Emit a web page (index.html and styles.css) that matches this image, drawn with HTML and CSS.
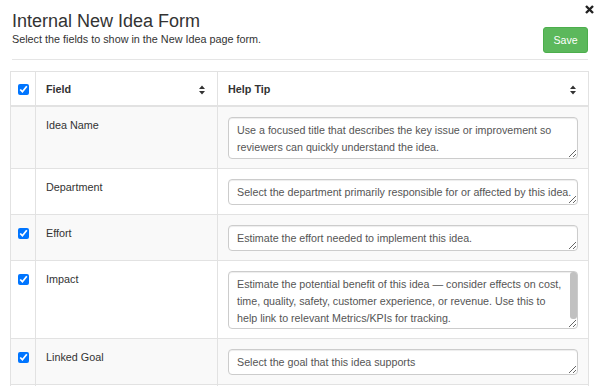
FILE: index.html
```html
<!DOCTYPE html>
<html lang="en">
<head>
    <meta charset="UTF-8">
    <meta name="viewport" content="width=device-width, initial-scale=1.0">
    <title>Internal New Idea Form</title>
    <link rel="stylesheet" href="styles.css">
</head>
<body>
    <div class="modal">
        <button type="button" class="close-btn" aria-label="Close">
            <svg width="9" height="9" viewBox="0 0 9 9">
                <path d="M1 1 L8 8 M8 1 L1 8" stroke="#222" stroke-width="2.4" fill="none"/>
            </svg>
        </button>

        <div class="modal-header">
            <div class="header-text">
                <h4>Internal New Idea Form</h4>
                <p>Select the fields to show in the New Idea page form.</p>
            </div>
            <button type="button" class="save-btn">Save</button>
        </div>

        <table class="fields-table">
            <colgroup>
                <col class="col-check">
                <col class="col-field">
                <col>
            </colgroup>
            <thead>
                <tr>
                    <th class="check-cell"><input type="checkbox" checked></th>
                    <th>
                        <div class="th-inner">
                            <span>Field</span>
                            <svg class="sort-icon" width="6" height="10" viewBox="0 0 6 10">
                                <path d="M0 4 L3 0.5 L6 4 Z M0 6 L3 9.5 L6 6 Z" fill="#333"/>
                            </svg>
                        </div>
                    </th>
                    <th>
                        <div class="th-inner">
                            <span>Help Tip</span>
                            <svg class="sort-icon" width="6" height="10" viewBox="0 0 6 10">
                                <path d="M0 4 L3 0.5 L6 4 Z M0 6 L3 9.5 L6 6 Z" fill="#333"/>
                            </svg>
                        </div>
                    </th>
                </tr>
            </thead>
            <tbody>
                <tr>
                    <td class="check-cell"></td>
                    <td>Idea Name</td>
                    <td><textarea class="tip tip-2">Use a focused title that describes the key issue or improvement so reviewers can quickly understand the idea.</textarea></td>
                </tr>
                <tr>
                    <td class="check-cell"></td>
                    <td>Department</td>
                    <td><textarea class="tip">Select the department primarily responsible for or affected by this idea.</textarea></td>
                </tr>
                <tr>
                    <td class="check-cell"><input type="checkbox" checked></td>
                    <td>Effort</td>
                    <td><textarea class="tip">Estimate the effort needed to implement this idea.</textarea></td>
                </tr>
                <tr>
                    <td class="check-cell"><input type="checkbox" checked></td>
                    <td>Impact</td>
                    <td>
                        <div class="tip-wrap">
                            <textarea class="tip tip-3">Estimate the potential benefit of this idea — consider effects on cost, time, quality, safety, customer experience, or revenue. Use this to help link to relevant Metrics/KPIs for tracking.</textarea>
                            <span class="scroll-thumb"></span>
                        </div>
                    </td>
                </tr>
                <tr>
                    <td class="check-cell"><input type="checkbox" checked></td>
                    <td>Linked Goal</td>
                    <td><textarea class="tip">Select the goal that this idea supports</textarea></td>
                </tr>
                <tr class="row-cut">
                    <td class="check-cell"></td>
                    <td></td>
                    <td></td>
                </tr>
            </tbody>
        </table>
    </div>
</body>
</html>
```

FILE: styles.css
```css
* {
    margin: 0;
    padding: 0;
    box-sizing: border-box;
}

html,
body {
    height: 100%;
    overflow: hidden;
}

body {
    font-family: "Liberation Sans", Arial, Helvetica, sans-serif;
    font-size: 10.8px;
    color: #333;
    background: white;
}

.modal {
    position: relative;
    padding: 0 11px 0 10px;
}

.close-btn {
    position: absolute;
    top: 5px;
    right: 6px;
    width: 9px;
    height: 9px;
    border: none;
    background: none;
    cursor: pointer;
    display: flex;
}

.modal-header {
    display: flex;
    justify-content: space-between;
    align-items: flex-start;
    margin: 0 1px 0 2px;
    padding: 10px 0 6px;
    border-bottom: 1px solid #e5e5e5;
}

.header-text h4 {
    font-size: 18px;
    font-weight: normal;
    line-height: 22px;
    color: #333;
}

.header-text p {
    font-size: 10.8px;
    line-height: 15px;
    color: #333;
}

.save-btn {
    width: 45px;
    height: 26px;
    margin-top: 17px;
    background: #5cb85c;
    border: 1px solid #4cae4c;
    border-radius: 3px;
    color: white;
    font-family: inherit;
    font-size: 10.6px;
    cursor: pointer;
}

.fields-table {
    width: 579px;
    margin-top: 11px;
    border-collapse: collapse;
    table-layout: fixed;
}

.col-check {
    width: 25px;
}

.col-field {
    width: 182px;
}

.fields-table th,
.fields-table td {
    border: 1px solid #e2e2e2;
    padding: 10px 10px 9px;
    line-height: 17px;
    text-align: left;
    vertical-align: top;
}

.fields-table th {
    padding: 9px 10px 7px;
    border-bottom: 2px solid #e2e2e2;
    font-weight: bold;
    vertical-align: bottom;
}

.fields-table tbody tr:nth-child(odd) {
    background: #f9f9f9;
}

.fields-table .row-cut td {
    height: 40px;
}

.th-inner {
    display: flex;
    align-items: center;
    justify-content: space-between;
}

.sort-icon {
    margin-right: 2px;
}

.fields-table .check-cell {
    padding: 10px 0 0;
    text-align: center;
}

.fields-table th.check-cell {
    padding: 0 0 10px;
    vertical-align: bottom;
}

.check-cell input {
    display: block;
    width: 11px;
    height: 11px;
    margin: 3px auto 0;
}

.tip {
    display: block;
    width: 100%;
    height: 26px;
    padding: 4px 3px 3px 8px;
    border: 1px solid #ccc;
    border-radius: 4px;
    box-shadow: inset 0 1px 1px rgba(0, 0, 0, 0.075);
    font-family: inherit;
    font-size: 10.7px;
    line-height: 17px;
    color: #555;
    background: white;
    resize: vertical;
    overflow: hidden;
}

.tip-2 {
    height: 42px;
}

.tip-wrap {
    position: relative;
}

.tip-3 {
    height: 58px;
    padding-right: 12px;
}

.scroll-thumb {
    position: absolute;
    top: 1px;
    right: 1px;
    width: 7px;
    height: 47px;
    border-radius: 3px;
    background: #c1c1c1;
}
```
